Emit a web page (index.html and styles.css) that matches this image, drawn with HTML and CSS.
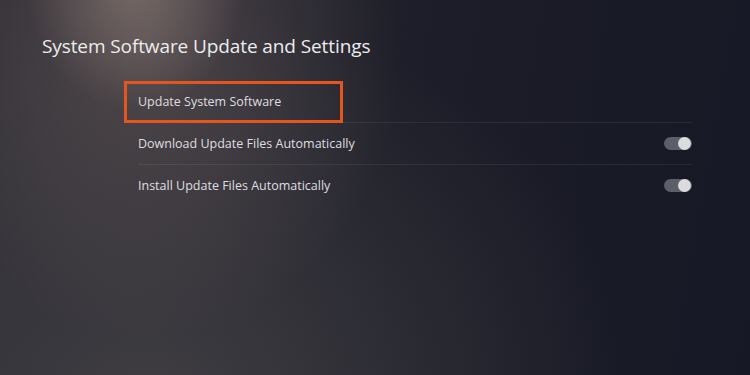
FILE: index.html
```html
<!DOCTYPE html>
<html lang="en">
<head>
    <meta charset="UTF-8">
    <meta name="viewport" content="width=device-width, initial-scale=1.0">
    <title>System Software Update and Settings</title>
    <link rel="stylesheet" href="styles.css">
</head>
<body>
    <div class="screen">
        <h1 class="title">System Software Update and Settings</h1>
        <div class="list">
            <div class="row focused">
                <span class="label">Update System Software</span>
            </div>
            <div class="row">
                <span class="label">Download Update Files Automatically</span>
                <span class="toggle on"></span>
            </div>
            <div class="row">
                <span class="label">Install Update Files Automatically</span>
                <span class="toggle on"></span>
            </div>
        </div>
    </div>
</body>
</html>
```

FILE: styles.css
```css
html, body {
    margin: 0;
    height: 100%;
}
body {
    font-family: 'Open Sans', 'Liberation Sans', sans-serif;
    color: #e4e4e6;
    background-color: #171925;
    background-image:
        radial-gradient(ellipse 110px 130px at 135px -20px, rgba(150, 132, 126, 0.6), rgba(150, 132, 126, 0) 100%),
        radial-gradient(ellipse 260px 300px at 145px 40px, rgba(110, 96, 94, 0.55), rgba(110, 96, 94, 0) 100%),
        radial-gradient(ellipse 480px 400px at 150px 400px, rgba(66, 64, 68, 0.9), rgba(66, 64, 68, 0) 100%),
        linear-gradient(100deg, #2a2a32 0%, #1c1d28 55%, #161825 100%);
    overflow: hidden;
}
.screen {
    width: 750px;
    height: 375px;
    padding-top: 33px;
    box-sizing: border-box;
}
.title {
    margin: 0 0 22px 42px;
    font-size: 19px;
    font-weight: 400;
    line-height: 26px;
    color: #ececee;
    letter-spacing: -0.1px;
}
.list {
    margin-left: 138px;
    width: 554px;
}
.row {
    display: flex;
    align-items: center;
    justify-content: space-between;
    height: 41px;
    border-bottom: 1px solid rgba(255, 255, 255, 0.07);
    font-size: 12.5px;
    color: #dedee0;
}
.row:last-child {
    border-bottom: none;
}
.row.focused {
    border-bottom-color: transparent;
    position: relative;
}
.row.focused::after {
    content: "";
    position: absolute;
    left: 205px;
    right: 0;
    bottom: -1px;
    border-bottom: 1px solid rgba(255, 255, 255, 0.07);
}
.row.focused .label {
    display: flex;
    align-items: center;
    box-sizing: border-box;
    width: 219px;
    height: 42px;
    margin-left: -14px;
    padding-left: 11px;
    border: 3px solid #e6551d;
}
.toggle {
    position: relative;
    width: 28px;
    height: 13px;
    border-radius: 7px;
    background: #5c5f67;
}
.toggle.on::after {
    content: "";
    position: absolute;
    right: 1px;
    top: 0;
    width: 13px;
    height: 13px;
    border-radius: 50%;
    background: #dcdcdf;
}
```
